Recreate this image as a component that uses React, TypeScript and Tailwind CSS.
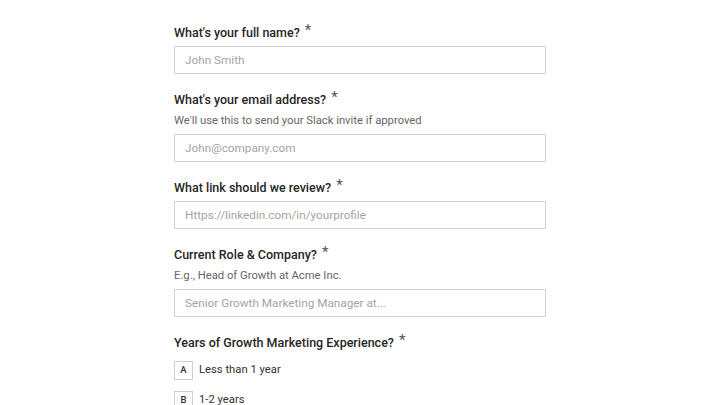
const fields = [
  { label: "What's your full name?", placeholder: 'John Smith' },
  {
    label: "What's your email address?",
    help: "We'll use this to send your Slack invite if approved",
    placeholder: 'John@company.com',
  },
  { label: 'What link should we review?', placeholder: 'Https://linkedin.com/in/yourprofile' },
  {
    label: 'Current Role & Company?',
    help: 'E.g., Head of Growth at Acme Inc.',
    placeholder: 'Senior Growth Marketing Manager at...',
  },
]

function Label({ text }: { text: string }) {
  return (
    <div className="h-5 flex items-center text-[12.5px] font-medium text-[#262626] leading-5">
      {text}
      <span className="ml-[5px] -mt-[7px] text-[15px] text-[#555] font-normal">*</span>
    </div>
  )
}

export default function App() {
  return (
    <div
      className="w-[720px] h-[405px] overflow-hidden bg-white"
      style={{ fontFamily: 'Roboto, "Liberation Sans", sans-serif' }}
    >
      <div className="w-[372px] ml-[174px] pt-[23px]">
        {fields.map((f) => (
          <div key={f.label} className="mb-4">
            <div className={f.help ? '' : 'mb-[3px]'}>
              <Label text={f.label} />
            </div>
            {f.help && (
              <div className="mt-[2px] text-[11.25px] leading-[18px] text-[#666] mb-[4px]">{f.help}</div>
            )}
            <input
              className="block w-full h-[28px] border border-[#d2d2d2] px-[10px] text-[11.75px] text-[#333] placeholder:text-[#a3a3a3] outline-none"
              placeholder={f.placeholder}
            />
          </div>
        ))}
        <Label text="Years of Growth Marketing Experience?" />
        <div className="mt-2 flex flex-col gap-[11px]">
          {[
            ['A', 'Less than 1 year'],
            ['B', '1-2 years'],
          ].map(([k, t]) => (
            <div key={k} className="flex items-center gap-[6px]">
              <span className="w-[19px] h-[19px] border border-[#cfcfcf] flex items-center justify-center text-[9.5px] font-medium text-[#333]">
                {k}
              </span>
              <span className="text-[11.25px] text-[#333]">{t}</span>
            </div>
          ))}
        </div>
      </div>
    </div>
  )
}
